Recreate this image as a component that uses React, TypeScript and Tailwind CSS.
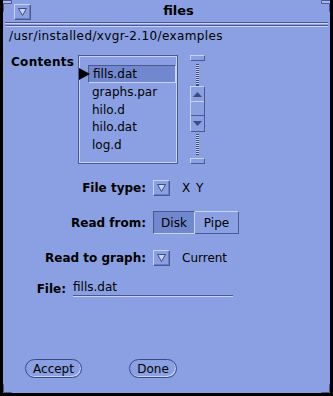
import type { ReactNode } from "react";

const FONT = { fontFamily: '"DejaVu Sans", "Liberation Sans", sans-serif' };

const files = ["fills.dat", "graphs.par", "hilo.d", "hilo.dat", "log.d"];

// little OpenLook abbreviated menu button (▽)
function MenuButton() {
  return (
    <div className="flex h-[16px] w-[17px] items-center justify-center border border-t-[#c9d3f6] border-l-[#c9d3f6] border-r-[#4b5990] border-b-[#4b5990] shadow-[inset_-1px_-1px_0_#6a7bbf]">
      <svg width="9" height="8" viewBox="0 0 9 8">
        <polygon points="0.5,0.5 8.5,0.5 4.5,7.5" fill="#c9d3f6" stroke="#3d4a80" strokeWidth="1" />
      </svg>
    </div>
  );
}

function Corner({ className, flipX, flipY }: { className: string; flipX?: boolean; flipY?: boolean }) {
  return (
    <svg
      width="12"
      height="12"
      viewBox="0 0 12 12"
      className={`absolute ${className}`}
      style={{ transform: `scale(${flipX ? -1 : 1}, ${flipY ? -1 : 1})` }}
    >
      <polygon points="0.5,0.5 11.5,0.5 11.5,3.5 3.5,3.5 3.5,11.5 0.5,11.5" fill="#a9b8ee" stroke="#4b5990" strokeWidth="1" />
    </svg>
  );
}

function Row({ label, children, className = "" }: { label: string; children: ReactNode; className?: string }) {
  return (
    <div className={`flex items-center ${className}`}>
      <div className="w-[143px] text-right text-[12px] font-bold leading-[14px]">{label}</div>
      <div className="ml-[7px] flex items-center">{children}</div>
    </div>
  );
}

function Cable({ h }: { h: string }) {
  return (
    <div
      className={`mx-auto w-[3px] ${h} bg-[repeating-linear-gradient(to_bottom,#3d4a80_0_1px,#c9d3f6_1px_2px)]`}
    />
  );
}

function Cap() {
  return (
    <div className="h-[6px] w-[15px] border border-t-[#c9d3f6] border-l-[#c9d3f6] border-r-[#4b5990] border-b-[#4b5990]" />
  );
}

export default function App() {
  return (
    <div
      className="relative flex h-[396px] w-[333px] flex-col overflow-hidden border-x-[3px] border-b-[3px] border-black bg-[#8aa0e3] text-black"
      style={FONT}
    >
      {/* top edge strip over the black side borders */}
      <div className="absolute left-[-3px] right-[-3px] top-0 h-[10px] bg-[#8aa0e3]" />
      <Corner className="left-[-3px] top-0" />
      <Corner className="right-[-3px] top-0" flipX />
      <Corner className="bottom-[-3px] left-[-3px]" flipY />
      <Corner className="bottom-[-3px] right-[-3px]" flipX flipY />

      {/* title bar */}
      <div className="relative flex h-[22px] items-center">
        <div className="ml-[11px] mt-[1px]">
          <MenuButton />
        </div>
        <div className="flex-1 pr-[4px] text-center text-[13px] font-bold leading-[16px]">files</div>
      </div>
      <div className="mx-[2px] flex flex-col">
        <div className="h-[1px] bg-[#4b5990]" />
        <div className="h-[1px] bg-[#c9d3f6]" />
        <div className="h-[1px]" />
        <div className="h-[1px] bg-[#4b5990]" />
        <div className="h-[1px] bg-[#c9d3f6]" />
      </div>

      <div className="ml-[6px] mt-[0px] h-[18px] text-[12px] leading-[18px] tracking-[0.4px]">
        /usr/installed/xvgr-2.10/examples
      </div>

      {/* contents list */}
      <div className="mt-[10px] flex">
        <div className="w-[75px] pl-[8px] text-[12px] font-bold leading-[14px] tracking-[0.3px]">Contents</div>
        <div className="relative h-[109px] w-[100px] border border-[#4b5990] shadow-[inset_1px_1px_0_#c9d3f6,inset_-1px_-1px_0_#c9d3f6]">
          <svg width="11" height="12" viewBox="0 0 11 12" className="absolute left-[0px] top-[12px]">
            <polygon points="0,0 11,6 0,12" fill="#000" />
          </svg>
          <div className="pt-[9px]">
            {files.map((f, i) => (
              <div
                key={f}
                className={`ml-[9px] mr-[1px] flex h-[17.75px] items-center pl-[4px] text-[12px] ${
                  i === 0
                    ? "h-[18px] border border-t-[#4b5990] border-l-[#4b5990] border-r-[#c9d3f6] border-b-[#c9d3f6] bg-[#7188cf] pl-[3px]"
                    : ""
                }`}
              >
                {f}
              </div>
            ))}
          </div>
        </div>

        {/* scrollbar */}
        <div className="ml-[12px] flex w-[15px] flex-col">
          <Cap />
          <div className="mt-[3px]" />
          <Cable h="h-[20px]" />
          <div className="mx-auto h-[2px] w-[3px] bg-[#3d4a80]" />
          <div className="flex h-[46px] w-[15px] flex-col border border-t-[#c9d3f6] border-l-[#c9d3f6] border-r-[#4b5990] border-b-[#4b5990]">
            <div className="flex h-[15px] items-center justify-center border-b border-[#c9d3f6]">
              <svg width="9" height="5" viewBox="0 0 9 5">
                <polygon points="4.5,0 9,5 0,5" fill="#3d4a80" />
              </svg>
            </div>
            <div className="h-[14px] border-b border-[#4b5990]" />
            <div className="flex flex-1 items-center justify-center">
              <svg width="9" height="5" viewBox="0 0 9 5">
                <polygon points="0,0 9,0 4.5,5" fill="#3d4a80" />
              </svg>
            </div>
          </div>
          <div className="mt-[2px]" />
          <Cable h="h-[21px]" />
          <div className="mt-[3px]" />
          <Cap />
        </div>
      </div>

      <Row label="File type:" className="mt-[16px] h-[16px]">
        <MenuButton />
        <span className="ml-[12px] text-[12px] leading-[14px] tracking-[1px]">X Y</span>
      </Row>

      <Row label="Read from:" className="mt-[15px] h-[23px]">
        <div className="flex h-[23px] text-[12px]">
          <div className="flex w-[42px] items-center justify-center border border-t-[#4b5990] border-l-[#4b5990] border-r-[#c9d3f6] border-b-[#c9d3f6] bg-[#7188cf]">
            Disk
          </div>
          <div className="flex w-[44px] items-center justify-center border border-l-0 border-t-[#c9d3f6] border-r-[#4b5990] border-b-[#4b5990]">
            Pipe
          </div>
        </div>
      </Row>

      <Row label="Read to graph:" className="mt-[16px] h-[16px]">
        <MenuButton />
        <span className="ml-[12px] text-[12px] leading-[14px]">Current</span>
      </Row>

      <div className="mt-[14px] flex items-end">
        <div className="w-[63px] text-right text-[12px] font-bold leading-[14px]">File:</div>
        <div className="ml-[7px] w-[160px] border-b border-[#4b5990] shadow-[0_1px_0_#c9d3f6] pb-[1px] text-[12px] leading-[14px]">
          fills.dat
        </div>
      </div>

      <div className="mt-auto mb-[15px] flex">
        <button className="ml-[22px] h-[19px] w-[57px] rounded-full border border-[#3d4a80] shadow-[inset_-1px_-1px_0_#c9d3f6] text-[12px] leading-[14px]">
          Accept
        </button>
        <button className="ml-[47px] h-[19px] w-[48px] rounded-full border border-[#3d4a80] shadow-[inset_-1px_-1px_0_#c9d3f6] text-[12px] leading-[14px]">
          Done
        </button>
      </div>
    </div>
  );
}
